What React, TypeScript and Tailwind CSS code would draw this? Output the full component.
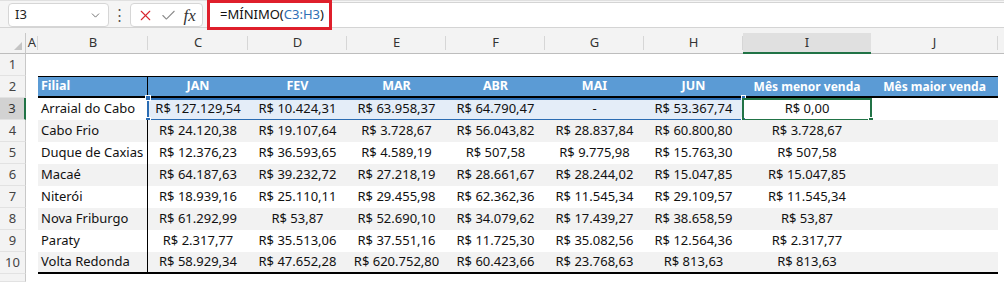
import { ChevronDown, X, Check } from 'lucide-react'

const GRID = 'grid grid-cols-[26px_12px_110px_100px_99px_99px_99px_99px_99px_128px_127px_6px]'

const MONTHS = ['JAN', 'FEV', 'MAR', 'ABR', 'MAI', 'JUN']

const DATA: { filial: string; values: string[]; min: string }[] = [
  { filial: 'Arraial do Cabo', values: ['R$ 127.129,54', 'R$ 10.424,31', 'R$ 63.958,37', 'R$ 64.790,47', '-', 'R$ 53.367,74'], min: 'R$ 0,00' },
  { filial: 'Cabo Frio', values: ['R$ 24.120,38', 'R$ 19.107,64', 'R$ 3.728,67', 'R$ 56.043,82', 'R$ 28.837,84', 'R$ 60.800,80'], min: 'R$ 3.728,67' },
  { filial: 'Duque de Caxias', values: ['R$ 12.376,23', 'R$ 36.593,65', 'R$ 4.589,19', 'R$ 507,58', 'R$ 9.775,98', 'R$ 15.763,30'], min: 'R$ 507,58' },
  { filial: 'Macaé', values: ['R$ 64.187,63', 'R$ 39.232,72', 'R$ 27.218,19', 'R$ 28.661,67', 'R$ 28.244,02', 'R$ 15.047,85'], min: 'R$ 15.047,85' },
  { filial: 'Niterói', values: ['R$ 18.939,16', 'R$ 25.110,11', 'R$ 29.455,98', 'R$ 62.362,36', 'R$ 11.545,34', 'R$ 29.109,57'], min: 'R$ 11.545,34' },
  { filial: 'Nova Friburgo', values: ['R$ 61.292,99', 'R$ 53,87', 'R$ 52.690,10', 'R$ 34.079,62', 'R$ 17.439,27', 'R$ 38.658,59'], min: 'R$ 53,87' },
  { filial: 'Paraty', values: ['R$ 2.317,77', 'R$ 35.513,06', 'R$ 37.551,16', 'R$ 11.725,30', 'R$ 35.082,56', 'R$ 12.564,36'], min: 'R$ 2.317,77' },
  { filial: 'Volta Redonda', values: ['R$ 58.929,34', 'R$ 47.652,28', 'R$ 620.752,80', 'R$ 60.423,66', 'R$ 23.768,63', 'R$ 813,63'], min: 'R$ 813,63' },
]

const COL_LETTERS = ['A', 'B', 'C', 'D', 'E', 'F', 'G', 'H', 'I', 'J']

function RowHead({ n, active }: { n?: number; active?: boolean }) {
  return (
    <div
      className={
        active
          ? 'flex items-center justify-center bg-[#d2d2d2] border-r-2 border-[#217346] border-b border-b-[#e2e2e2] text-[13px] text-[#333]'
          : 'flex items-center justify-center bg-[#f3f3f3] border-r border-[#c8c8c8] border-b border-b-[#e2e2e2] text-[13px] text-[#444]'
      }
    >
      {n}
    </div>
  )
}

function FormulaBar() {
  return (
    <div className="h-[28px] flex items-start bg-[#f5f5f5] border-t border-t-[#e0e0e0] border-b border-[#d4d4d4]">
      <div className="ml-[8px] mt-[2px] w-[101px] h-[24px] bg-white border border-[#d6d6d6] rounded-[4px] flex items-center justify-between pl-[6px] pr-[6px]">
        <span className="text-[13px] text-[#222]">I3</span>
        <ChevronDown className="w-[13px] h-[13px] text-[#555]" strokeWidth={1.5} />
      </div>
      <div className="w-[21px] h-[27px] flex items-center justify-center text-[15px] text-[#555] leading-none">⋮</div>
      <div className="mt-[2px] w-[73px] h-[24px] bg-white border border-[#d6d6d6] rounded-[4px] flex items-center justify-around px-[3px]">
        <X className="w-[17px] h-[17px] text-[#d9262e]" strokeWidth={1.5} />
        <Check className="w-[17px] h-[17px] text-[#8a8a8a]" strokeWidth={1.5} />
        <span className="font-['Liberation_Serif',serif] italic text-[17px] text-[#333] leading-none">fx</span>
      </div>
      <div className="ml-[4px] mt-[1px] flex-1 h-[26px] bg-white border-t border-b border-[#d4d4d4] relative">
        <div className="absolute left-0 top-[-3px] w-[125px] h-[30px] border-[3px] border-[#df1f2b]" />
        <div className="pl-[13px] h-full flex items-center text-[13px] text-[#111]">
          =MÍNIMO(<span className="text-[#2f6fb5]">C3:H3</span>)
        </div>
      </div>
    </div>
  )
}

function ColumnHeader() {
  return (
    <div className={GRID + ' h-[26px] bg-[#f3f3f3] items-end'}>
      <div className="h-[21px] relative border-r border-[#c8c8c8] border-b border-b-[#bdbdbd]">
        <div className="absolute right-[3px] bottom-[3px] w-0 h-0 border-l-[8px] border-l-transparent border-b-[8px] border-b-[#c4c4c4]" />
      </div>
      {COL_LETTERS.map((c) => (
        <div
          key={c}
          className={
            c === 'I'
              ? 'h-[21px] flex items-center justify-center bg-[#e0e0e0] border-b-2 border-[#217346] text-[13px] text-[#333]'
              : 'h-[21px] relative flex items-center justify-center border-b border-[#bdbdbd] text-[13px] text-[#333]'
          }
        >
          {c}
          {c !== 'I' && <span className="absolute right-0 top-[3px] bottom-[3px] w-px bg-[#d6d6d6]" />}
        </div>
      ))}
      <div className="h-[21px] border-b border-[#bdbdbd]" />
    </div>
  )
}

export default function App() {
  return (
    <div className="w-[1004px] h-[282px] overflow-hidden bg-white font-['Noto_Sans',sans-serif]">
      <FormulaBar />
      <ColumnHeader />

      {/* row 1 */}
      <div className={GRID + ' h-[22px]'}>
        <RowHead n={1} />
      </div>

      {/* row 2: table header */}
      <div className={GRID + ' h-[22px]'}>
        <RowHead n={2} />
        <div />
        <div className="bg-[#5b9bd5] border-t border-b-2 border-black border-r text-white font-bold text-[12.5px] flex items-center pl-[3px]">
          Filial
        </div>
        {MONTHS.map((m) => (
          <div key={m} className="bg-[#5b9bd5] border-t border-b-2 border-black text-white font-bold text-[12.5px] flex items-center justify-center">
            {m}
          </div>
        ))}
        <div className="bg-[#5b9bd5] border-t border-b-2 border-black text-white font-bold text-[12px] flex items-center justify-center">
          Mês menor venda
        </div>
        <div className="bg-[#5b9bd5] border-t border-b-2 border-black text-white font-bold text-[12px] flex items-center justify-center">
          Mês maior venda
        </div>
      </div>

      {DATA.map((row, i) => {
        const n = i + 3
        const shaded = i % 2 === 1
        const last = i === DATA.length - 1
        const bg = shaded ? 'bg-[#f2f2f2]' : 'bg-white'
        const bottom = last ? ' border-b-2 border-b-black' : ''
        const sel = n === 3
        return (
          <div key={row.filial} className={GRID + ' h-[22px] relative'}>
            <RowHead n={n} active={sel} />
            <div />
            <div className={bg + bottom + ' border-r border-r-black text-[13px] text-[#111] flex items-center pl-[3px]'}>{row.filial}</div>
            {row.values.map((v, j) => (
              <div key={j} className={(sel ? 'bg-[#e4edf8]' : bg) + bottom + ' text-[13px] text-[#111] flex items-center justify-center'}>
                {v}
              </div>
            ))}
            <div className={bg + bottom + ' text-[13px] text-[#111] flex items-center justify-center'}>{row.min}</div>
            <div className={bg + bottom} />
            {sel && (
              <>
                <div className="absolute left-[147px] top-0 w-[597px] h-[23px] border-2 border-[#2a6cb3]" />
                <div className="absolute left-[145px] top-[-3px] w-[6px] h-[6px] bg-[#2a6cb3] border border-white" />
                <div className="absolute left-[145px] top-[19px] w-[6px] h-[6px] bg-[#2a6cb3] border border-white" />
                <div className="absolute left-[741px] top-[-3px] w-[5px] h-[5px] bg-[#2a6cb3] border border-white" />
                <div className="absolute left-[741px] top-[19px] w-[5px] h-[5px] bg-[#2a6cb3] border border-white" />
                <div className="absolute left-[742px] top-0 w-[130px] h-[23px] border-2 border-[#217346]" />
                <div className="absolute left-[868px] top-[19px] w-[6px] h-[6px] bg-[#217346] border border-white" />
              </>
            )}
          </div>
        )
      })}

      <div className={GRID + ' h-[8px]'}>
        <RowHead />
      </div>
    </div>
  )
}
